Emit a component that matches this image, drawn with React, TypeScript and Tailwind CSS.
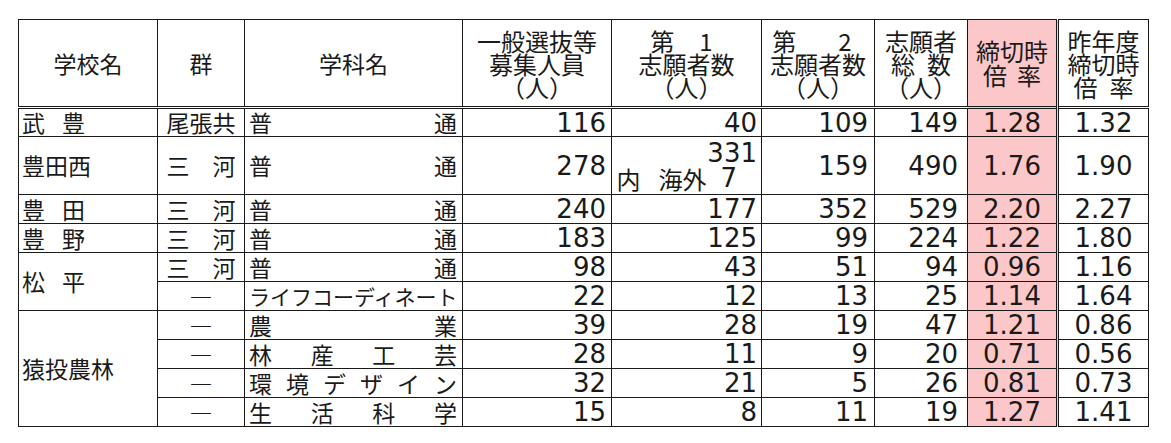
import React from "react";

type Row = {
  school?: [string, string?];
  span?: number;
  gun: string;
  dept: string;
  distribute?: boolean;
  a: string;
  b: string | string[];
  c: string;
  d: string;
  e: string;
  f: string;
  tall?: boolean;
};

const rows: Row[] = [
  { school: ["武", "豊"], span: 1, gun: "尾張共", dept: "普通", distribute: true, a: "116", b: "40", c: "109", d: "149", e: "1.28", f: "1.32" },
  { school: ["豊田西"], span: 1, gun: "三　河", dept: "普通", distribute: true, a: "278", b: ["331", "内 海外 7"], c: "159", d: "490", e: "1.76", f: "1.90", tall: true },
  { school: ["豊", "田"], span: 1, gun: "三　河", dept: "普通", distribute: true, a: "240", b: "177", c: "352", d: "529", e: "2.20", f: "2.27" },
  { school: ["豊", "野"], span: 1, gun: "三　河", dept: "普通", distribute: true, a: "183", b: "125", c: "99", d: "224", e: "1.22", f: "1.80" },
  { school: ["松", "平"], span: 2, gun: "三　河", dept: "普通", distribute: true, a: "98", b: "43", c: "51", d: "94", e: "0.96", f: "1.16" },
  { gun: "―", dept: "ライフコーディネート", distribute: false, a: "22", b: "12", c: "13", d: "25", e: "1.14", f: "1.64" },
  { school: ["猿投農林"], span: 4, gun: "―", dept: "農業", distribute: true, a: "39", b: "28", c: "19", d: "47", e: "1.21", f: "0.86" },
  { gun: "―", dept: "林産工芸", distribute: true, a: "28", b: "11", c: "9", d: "20", e: "0.71", f: "0.56" },
  { gun: "―", dept: "環境デザイン", distribute: true, a: "32", b: "21", c: "5", d: "26", e: "0.81", f: "0.73" },
  { gun: "―", dept: "生活科学", distribute: true, a: "15", b: "8", c: "11", d: "19", e: "1.27", f: "1.41" },
];

const cjk = "font-['Noto_Sans_CJK_JP',sans-serif]";
const num = "font-['DejaVu_Sans','Noto_Sans_CJK_JP',sans-serif]";
const cell = "border border-[#1a1a1a] p-0";

function Gap({ w }: { w: string }) {
  return <span className={`inline-block ${w}`} />;
}

export default function App() {
  return (
    <div className="w-[1171px] h-[443px] bg-white pl-[18px] pt-[19px] text-[#1a1a1a]">
      <table className={`border-collapse table-fixed w-[1130px] text-[23px] ${cjk}`}>
        <colgroup>
          <col className="w-[139px]" />
          <col className="w-[87px]" />
          <col className="w-[218px]" />
          <col className="w-[149px]" />
          <col className="w-[150px]" />
          <col className="w-[113px]" />
          <col className="w-[93px]" />
          <col className="w-[90px]" />
          <col className="w-[91px]" />
        </colgroup>
        <thead>
          <tr className="h-[88px] border-b-[3px] border-double border-b-[#1a1a1a]">
            <th className={`${cell} font-normal text-center align-middle`}>学校名</th>
            <th className={`${cell} font-normal text-center align-middle`}>群</th>
            <th className={`${cell} font-normal text-center align-middle`}>学科名</th>
            <th className={`${cell} font-normal align-middle text-[24px]`}>
              <div className="flex flex-col items-center leading-[23px]">
                <span>一般選抜等</span>
                <span>募集人員</span>
                <span>（人）</span>
              </div>
            </th>
            <th className={`${cell} font-normal align-middle text-[24px]`}>
              <div className="flex flex-col items-center leading-[23px]">
                <span className="mr-[10px] flex items-center">
                  <span>第</span>
                  <Gap w="w-[25px]" />
                  <span>1</span>
                </span>
                <span>志願者数</span>
                <span>（人）</span>
              </div>
            </th>
            <th className={`${cell} font-normal align-middle text-[24px]`}>
              <div className="flex flex-col items-center leading-[23px]">
                <span className="mr-[12px] flex items-center">
                  <span>第</span>
                  <Gap w="w-[42px]" />
                  <span>2</span>
                </span>
                <span>志願者数</span>
                <span>（人）</span>
              </div>
            </th>
            <th className={`${cell} font-normal align-middle text-[24px]`}>
              <div className="flex flex-col items-center leading-[23px]">
                <span>志願者</span>
                <span className="flex items-center">
                  <span>総</span>
                  <Gap w="w-[12px]" />
                  <span>数</span>
                </span>
                <span>（人）</span>
              </div>
            </th>
            <th className={`${cell} font-normal align-middle text-[24px] bg-[#fcc7c8] border-r-[3px] border-r-[#1a1a1a] border-double`}>
              <div className="flex flex-col items-center leading-[24px]">
                <span>締切時</span>
                <span className="flex items-center">
                  <span>倍</span>
                  <Gap w="w-[10px]" />
                  <span>率</span>
                </span>
              </div>
            </th>
            <th className={`${cell} font-normal align-middle text-[24px]`}>
              <div className="flex flex-col items-center leading-[23px]">
                <span>昨年度</span>
                <span>締切時</span>
                <span className="flex items-center">
                  <span>倍</span>
                  <Gap w="w-[12px]" />
                  <span>率</span>
                </span>
              </div>
            </th>
          </tr>
        </thead>
        <tbody>
          {rows.map((r, i) => (
            <tr key={i} className={r.tall ? "h-[58px]" : "h-[29px]"}>
              {r.school !== undefined && (
                <td rowSpan={r.span} className={`${cell} pl-[3px] align-middle leading-none`}>
                  <div className="flex items-center">
                    <span>{r.school[0]}</span>
                    {r.school[1] && (
                      <>
                        <Gap w="w-[17px]" />
                        <span>{r.school[1]}</span>
                      </>
                    )}
                  </div>
                </td>
              )}
              <td className={`${cell} text-center align-middle whitespace-pre leading-none`}>{r.gun}</td>
              <td className={`${cell} pl-[4px] pr-[5px] align-middle leading-none`}>
                {r.distribute ? (
                  <div className="flex justify-between">
                    {r.dept.split("").map((ch, k) => (
                      <span key={k}>{ch}</span>
                    ))}
                  </div>
                ) : (
                  <div className="text-[21px] text-right whitespace-nowrap">{r.dept}</div>
                )}
              </td>
              <td className={`${cell} ${num} text-[26px] text-right pr-[5px] align-middle leading-none`}>{r.a}</td>
              <td className={`${cell} ${num} text-[26px] text-right pr-[4px] align-middle leading-none`}>
                {Array.isArray(r.b) ? (
                  <div className="flex flex-col items-end leading-[25px]">
                    <span>{r.b[0]}</span>
                    <span className="flex items-center text-[24px] mr-[20px]">
                      <span className={cjk}>内</span>
                      <Gap w="w-[18px]" />
                      <span className={cjk}>海外</span>
                      <Gap w="w-[14px]" />
                      <span className="text-[26px]">7</span>
                    </span>
                  </div>
                ) : (
                  r.b
                )}
              </td>
              <td className={`${cell} ${num} text-[26px] text-right pr-[6px] align-middle leading-none`}>{r.c}</td>
              <td className={`${cell} ${num} text-[26px] text-right pr-[9px] align-middle leading-none`}>{r.d}</td>
              <td className={`${cell} ${num} text-[26px] text-center align-middle leading-none bg-[#fcc7c8] border-r-[3px] border-r-[#1a1a1a] border-double`}>
                {r.e}
              </td>
              <td className={`${cell} ${num} text-[26px] text-center align-middle leading-none`}>{r.f}</td>
            </tr>
          ))}
        </tbody>
      </table>
    </div>
  );
}
